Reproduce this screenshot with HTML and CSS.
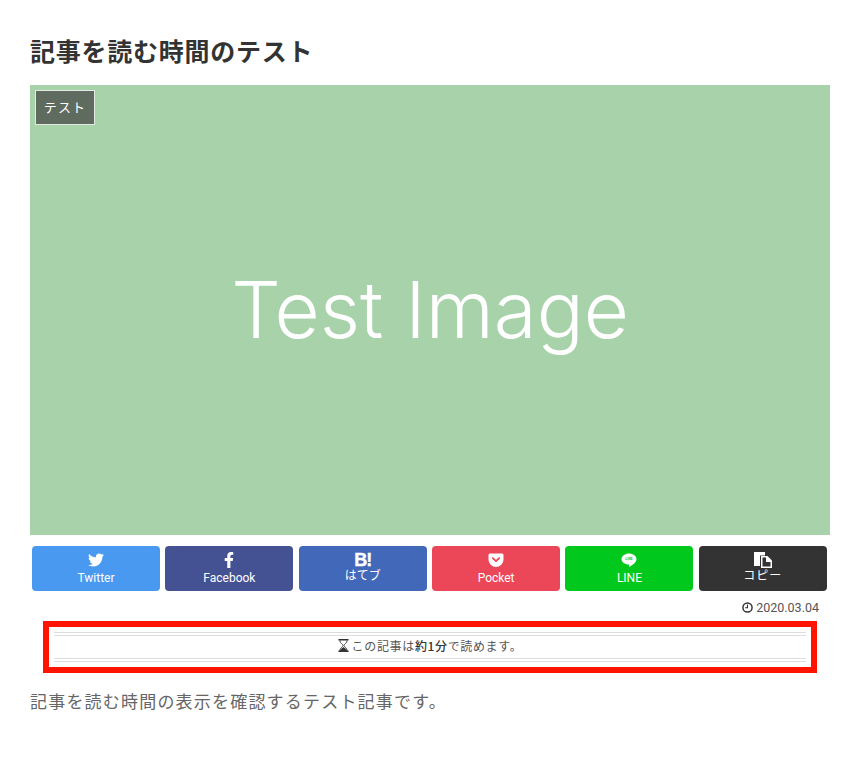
FILE: index.html
```html
<!DOCTYPE html>
<html lang="ja">
<head>
<meta charset="utf-8">
<title>記事を読む時間のテスト</title>
<link rel="stylesheet" href="styles.css">
</head>
<body>
<main class="article">
  <h1 class="title">記事を読む時間のテスト</h1>
  <div class="eyecatch">
    <span class="cat">テスト</span>
    <span class="eyecatch-text">Test Image</span>
  </div>
  <div class="share">
    <a class="btn tw">
      <svg class="ico" viewBox="0 0 512 512"><path fill="currentColor" d="M459.37 151.716c.325 4.548.325 9.097.325 13.645 0 138.72-105.583 298.558-298.558 298.558-59.452 0-114.68-17.219-161.137-47.106 8.447.974 16.568 1.299 25.34 1.299 49.055 0 94.213-16.568 130.274-44.832-46.132-.975-84.792-31.188-98.112-72.772 6.498.974 12.995 1.624 19.818 1.624 9.421 0 18.843-1.3 27.614-3.573-48.081-9.747-84.143-51.98-84.143-102.985v-1.299c13.969 7.797 30.214 12.67 47.431 13.319-28.264-18.843-46.781-51.005-46.781-87.391 0-19.492 5.197-37.36 14.294-52.954 51.655 63.675 129.3 105.258 216.365 109.807-1.624-7.797-2.599-15.918-2.599-24.04 0-57.828 46.782-104.934 104.934-104.934 30.213 0 57.502 12.67 76.67 33.137 23.715-4.548 46.456-13.32 66.599-25.34-7.798 24.366-24.366 45.132-46.132 58.127 21.117-2.273 41.584-8.122 60.426-16.243-14.292 20.791-32.161 39.308-52.628 54.253z"/></svg>
      <span class="lbl">Twitter</span>
    </a>
    <a class="btn fb">
      <svg class="ico" viewBox="0 0 320 512"><path fill="currentColor" d="M279.14 288l14.22-92.66h-88.91v-60.13c0-25.35 12.42-50.06 52.24-50.06h40.42V6.26S260.43 0 225.36 0c-73.22 0-121.08 44.38-121.08 124.72v70.62H22.89V288h81.39v224h100.17V288z"/></svg>
      <span class="lbl">Facebook</span>
    </a>
    <a class="btn hb">
      <span class="hb-mark">B!</span>
      <span class="lbl">はてブ</span>
    </a>
    <a class="btn pk">
      <svg class="ico" viewBox="0 0 16 16"><path fill="currentColor" d="M2 1.500h12a1.500 1.500 0 0 1 1.500 1.500V7.500a7.500 7.500 0 0 1-15 0V3A1.500 1.500 0 0 1 2 1.500z"/><path fill="none" stroke="#ec4758" stroke-width="1.800" stroke-linecap="round" stroke-linejoin="round" d="M4.800 6.200l3.200 3 3.200-3"/></svg>
      <span class="lbl">Pocket</span>
    </a>
    <a class="btn ln">
      <svg class="ico" viewBox="0 0 16 16"><path fill="currentColor" d="M8 1.500c4.100 0 7.500 2.500 7.500 5.500 0 3-2.800 5.300-6.600 7.600-.6.400-1 .3-.9-.3l.1-1.800C3.700 12.500.5 10.100.5 7 .5 4 3.900 1.500 8 1.500z"/><text class="ln-t" x="8" y="8.300" text-anchor="middle">LINE</text></svg>
      <span class="lbl">LINE</span>
    </a>
    <a class="btn cp">
      <svg class="ico ico-cp" viewBox="0 0 18 16"><path fill="currentColor" d="M0 0h11v3.500H6V14H0z"/><path fill="currentColor" d="M7 4h6.500L18 8.500V16H7z"/><path fill="#333" d="M8.500 5.500h3.500V10h4.500v4.500h-8z"/></svg>
      <span class="lbl">コピー</span>
    </a>
  </div>
  <div class="date">
    <svg class="clock" viewBox="0 0 12 12"><circle cx="6" cy="6" r="5" fill="none" stroke="currentColor" stroke-width="1.600"/><path fill="none" stroke="currentColor" stroke-width="1.200" d="M6 2.800v3.500H3.400"/></svg>
    <span>2020.03.04</span>
  </div>
  <div class="readtime">
    <div class="readtime-inner">
      <svg class="glass" viewBox="0 0 12 14"><path fill="currentColor" d="M0.500 0h11v1.500H.500zM.500 12.500h11V14H.500z"/><path fill="none" stroke="currentColor" stroke-width="1" d="M2 1.500c0 3 3.500 4 3.500 5.500S2 9.500 2 12.500h8c0-3-3.500-4-3.500-5.500S10 4.500 10 1.500"/><path fill="currentColor" d="M2.500 12.500c0-2 2.500-3 3.500-4 1 1 3.500 2 3.500 4z"/></svg>
      <span>この記事は<b class="mins">約1分</b>で読めます。</span>
    </div>
  </div>
  <p class="body">記事を読む時間の表示を確認するテスト記事です。</p>
</main>
</body>
</html>
```
FILE: styles.css
```css
* { box-sizing: border-box; }
html, body { margin: 0; padding: 0; background: #fff; }
body {
  font-family: "Noto Sans CJK JP", "Noto Sans", sans-serif;
  color: #333;
  width: 860px;
}
.article { padding: 34px 30px 0; }
.title {
  margin: 0 0 18px;
  font-size: 25px;
  line-height: 33px;
  font-weight: 700;
  letter-spacing: 0.75px;
  color: #333;
}
.eyecatch {
  position: relative;
  height: 450px;
  background: #a8d2aa;
  display: flex;
  align-items: center;
  justify-content: center;
}
.eyecatch-text {
  font-family: "Inter", sans-serif;
  font-weight: 300;
  font-size: 78px;
  line-height: 1;
  color: #fff;
}
.cat {
  position: absolute;
  top: 5px;
  left: 5px;
  width: 60px;
  height: 35px;
  padding-bottom: 3px;
  display: flex;
  align-items: center;
  justify-content: center;
  font-size: 13px;
  letter-spacing: 1.2px;
  color: #fff;
  background: #5f6b5f;
  border: 1px solid #e4e8e4;
}
.share {
  display: grid;
  grid-template-columns: repeat(6, 1fr);
  column-gap: 5.3px;
  margin: 11px 3.2px 0 2px;
}
.btn {
  height: 45px;
  border-radius: 4px;
  color: #fff;
  display: flex;
  flex-direction: column;
  align-items: center;
  padding-top: 6px;
}
.tw { background: #4999f0; }
.fb { background: #445193; }
.hb { background: #4268b9; }
.pk { background: #ec4758; }
.ln { background: #00c81d; }
.cp { background: #333; }
.ico { width: 16px; height: 16px; display: block; }
.ico-cp { width: 18px; }
.hb-mark {
  font-family: "Liberation Sans", sans-serif;
  font-weight: 700;
  font-size: 18px;
  line-height: 16px;
  height: 16px;
  letter-spacing: -1px;
  -webkit-text-stroke: 0.4px #fff;
}
.ln-t { font-family: "Liberation Sans", sans-serif; font-size: 3.2px; font-weight: 700; fill: #00c81d; }
.lbl {
  font-family: "Roboto", "Noto Sans CJK JP", sans-serif;
  font-size: 12px;
  line-height: 16px;
  margin-top: 2px;
}
.hb .lbl, .cp .lbl { margin-top: 0; }
.cp .lbl { letter-spacing: 1px; }
.date {
  display: flex;
  justify-content: flex-end;
  align-items: center;
  gap: 3px;
  height: 16px;
  margin-top: 8px;
  padding-right: 11px;
  font-family: "Roboto", sans-serif;
  font-size: 12.500px;
  color: #555;
}
.clock { width: 11px; height: 11px; color: #333; }
.readtime {
  margin: 6px 13px 0;
  border: 6px solid #ff1400;
  padding: 5px;
}
.readtime-inner {
  border-top: 4px double #ddd;
  border-bottom: 4px double #ddd;
  height: 30px;
  padding-bottom: 3px;
  display: flex;
  align-items: center;
  justify-content: center;
  gap: 3px;
  font-size: 12px;
  letter-spacing: 0.65px;
  color: #555;
}
.mins { font-weight: 500; color: #333; }
.glass { width: 11px; height: 13px; color: #333; }
.body {
  margin: 16px 0 0;
  font-size: 17px;
  line-height: 24px;
  letter-spacing: 1.2px;
  color: #666;
}
```
